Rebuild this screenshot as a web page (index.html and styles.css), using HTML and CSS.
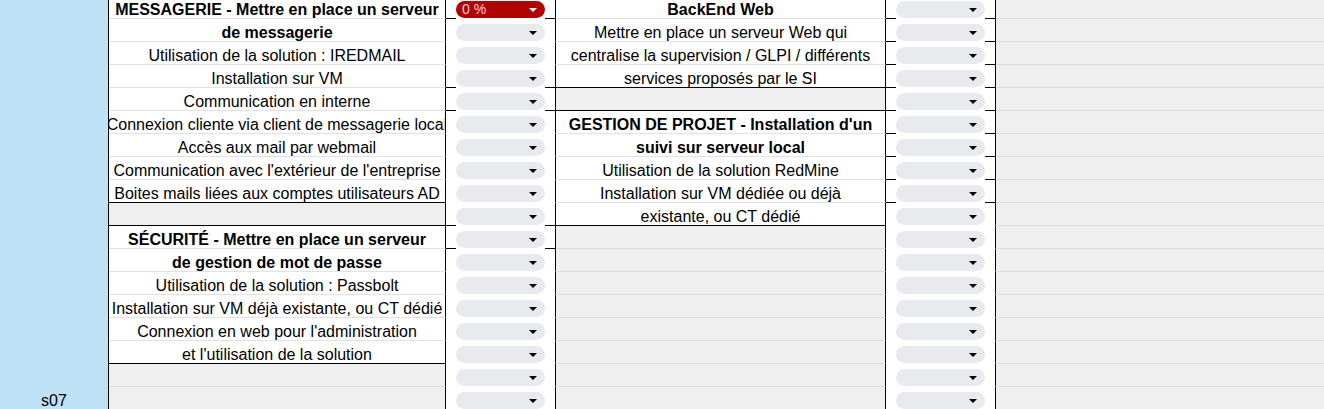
FILE: index.html
```html
<!DOCTYPE html>
<html lang="fr">
<head>
<meta charset="utf-8">
<title>Feuille</title>
<link rel="stylesheet" href="styles.css">
</head>
<body>
<div class="sheet">
  <!-- row 0 -->
  <div class="cell a"></div>
  <div class="cell b bold"><span>MESSAGERIE - Mettre en place un serveur</span></div>
  <div class="cell c bk"><div class="mask"><div class="pill red"><span class="val">0 %</span><span class="arr"></span></div></div></div>
  <div class="cell d bold"><span>BackEnd Web</span></div>
  <div class="cell e bk"><div class="mask"><div class="pill"><span class="arr"></span></div></div></div>
  <div class="cell f"></div>
  <!-- row 1 -->
  <div class="cell a"></div>
  <div class="cell b bold"><span>de messagerie</span></div>
  <div class="cell c"><div class="mask"><div class="pill"><span class="arr"></span></div></div></div>
  <div class="cell d"><span>Mettre en place un serveur Web qui</span></div>
  <div class="cell e bk"><div class="mask"><div class="pill"><span class="arr"></span></div></div></div>
  <div class="cell f"></div>
  <!-- row 2 -->
  <div class="cell a"></div>
  <div class="cell b"><span>Utilisation de la solution : IREDMAIL</span></div>
  <div class="cell c"><div class="mask"><div class="pill"><span class="arr"></span></div></div></div>
  <div class="cell d"><span>centralise la supervision / GLPI / différents</span></div>
  <div class="cell e bk"><div class="mask"><div class="pill"><span class="arr"></span></div></div></div>
  <div class="cell f"></div>
  <!-- row 3 -->
  <div class="cell a"></div>
  <div class="cell b"><span>Installation sur VM</span></div>
  <div class="cell c bk"><div class="mask"><div class="pill"><span class="arr"></span></div></div></div>
  <div class="cell d bk"><span>services proposés par le SI</span></div>
  <div class="cell e bk"><div class="mask"><div class="pill"><span class="arr"></span></div></div></div>
  <div class="cell f"></div>
  <!-- row 4 -->
  <div class="cell a"></div>
  <div class="cell b"><span>Communication en interne</span></div>
  <div class="cell c bk"><div class="mask"><div class="pill"><span class="arr"></span></div></div></div>
  <div class="cell d gray bk"></div>
  <div class="cell e bk"><div class="mask"><div class="pill"><span class="arr"></span></div></div></div>
  <div class="cell f"></div>
  <!-- row 5 -->
  <div class="cell a"></div>
  <div class="cell b"><span>Connexion cliente via client de messagerie local</span></div>
  <div class="cell c"><div class="mask"><div class="pill"><span class="arr"></span></div></div></div>
  <div class="cell d bold"><span>GESTION DE PROJET - Installation d'un</span></div>
  <div class="cell e bk"><div class="mask"><div class="pill"><span class="arr"></span></div></div></div>
  <div class="cell f"></div>
  <!-- row 6 -->
  <div class="cell a"></div>
  <div class="cell b"><span>Accès aux mail par webmail</span></div>
  <div class="cell c"><div class="mask"><div class="pill"><span class="arr"></span></div></div></div>
  <div class="cell d bold"><span>suivi sur serveur local</span></div>
  <div class="cell e bk"><div class="mask"><div class="pill"><span class="arr"></span></div></div></div>
  <div class="cell f"></div>
  <!-- row 7 -->
  <div class="cell a"></div>
  <div class="cell b"><span>Communication avec l'extérieur de l'entreprise</span></div>
  <div class="cell c"><div class="mask"><div class="pill"><span class="arr"></span></div></div></div>
  <div class="cell d"><span>Utilisation de la solution RedMine</span></div>
  <div class="cell e bk"><div class="mask"><div class="pill"><span class="arr"></span></div></div></div>
  <div class="cell f"></div>
  <!-- row 8 -->
  <div class="cell a"></div>
  <div class="cell b bk"><span>Boites mails liées aux comptes utilisateurs AD</span></div>
  <div class="cell c"><div class="mask"><div class="pill"><span class="arr"></span></div></div></div>
  <div class="cell d"><span>Installation sur VM dédiée ou déjà</span></div>
  <div class="cell e bk"><div class="mask"><div class="pill"><span class="arr"></span></div></div></div>
  <div class="cell f"></div>
  <!-- row 9 -->
  <div class="cell a"></div>
  <div class="cell b gray bk"></div>
  <div class="cell c bk"><div class="mask"><div class="pill"><span class="arr"></span></div></div></div>
  <div class="cell d bk"><span>existante, ou CT dédié</span></div>
  <div class="cell e"><div class="mask"><div class="pill"><span class="arr"></span></div></div></div>
  <div class="cell f"></div>
  <!-- row 10 -->
  <div class="cell a"></div>
  <div class="cell b bold"><span>SÉCURITÉ - Mettre en place un serveur</span></div>
  <div class="cell c bk"><div class="mask"><div class="pill"><span class="arr"></span></div></div></div>
  <div class="cell d gray"></div>
  <div class="cell e"><div class="mask"><div class="pill"><span class="arr"></span></div></div></div>
  <div class="cell f"></div>
  <!-- row 11 -->
  <div class="cell a"></div>
  <div class="cell b bold"><span>de gestion de mot de passe</span></div>
  <div class="cell c"><div class="mask"><div class="pill"><span class="arr"></span></div></div></div>
  <div class="cell d gray"></div>
  <div class="cell e"><div class="mask"><div class="pill"><span class="arr"></span></div></div></div>
  <div class="cell f"></div>
  <!-- row 12 -->
  <div class="cell a"></div>
  <div class="cell b"><span>Utilisation de la solution : Passbolt</span></div>
  <div class="cell c"><div class="mask"><div class="pill"><span class="arr"></span></div></div></div>
  <div class="cell d gray"></div>
  <div class="cell e"><div class="mask"><div class="pill"><span class="arr"></span></div></div></div>
  <div class="cell f"></div>
  <!-- row 13 -->
  <div class="cell a"></div>
  <div class="cell b"><span>Installation sur VM déjà existante, ou CT dédié</span></div>
  <div class="cell c"><div class="mask"><div class="pill"><span class="arr"></span></div></div></div>
  <div class="cell d gray"></div>
  <div class="cell e"><div class="mask"><div class="pill"><span class="arr"></span></div></div></div>
  <div class="cell f"></div>
  <!-- row 14 -->
  <div class="cell a"></div>
  <div class="cell b"><span>Connexion en web pour l'administration</span></div>
  <div class="cell c"><div class="mask"><div class="pill"><span class="arr"></span></div></div></div>
  <div class="cell d gray"></div>
  <div class="cell e"><div class="mask"><div class="pill"><span class="arr"></span></div></div></div>
  <div class="cell f"></div>
  <!-- row 15 -->
  <div class="cell a"></div>
  <div class="cell b bk"><span>et l'utilisation de la solution</span></div>
  <div class="cell c"><div class="mask"><div class="pill"><span class="arr"></span></div></div></div>
  <div class="cell d gray"></div>
  <div class="cell e"><div class="mask"><div class="pill"><span class="arr"></span></div></div></div>
  <div class="cell f"></div>
  <!-- row 16 -->
  <div class="cell a"></div>
  <div class="cell b gray"></div>
  <div class="cell c"><div class="mask"><div class="pill"><span class="arr"></span></div></div></div>
  <div class="cell d gray"></div>
  <div class="cell e"><div class="mask"><div class="pill"><span class="arr"></span></div></div></div>
  <div class="cell f"></div>
  <!-- row 17 -->
  <div class="cell a"><span>s07</span></div>
  <div class="cell b gray"></div>
  <div class="cell c"><div class="mask"><div class="pill"><span class="arr"></span></div></div></div>
  <div class="cell d gray"></div>
  <div class="cell e"><div class="mask"><div class="pill"><span class="arr"></span></div></div></div>
  <div class="cell f"></div>
</div>
</body>
</html>
```
FILE: styles.css
```css
* { box-sizing: border-box; margin: 0; padding: 0; }
html, body { height: 100%; overflow: hidden; background: #efefef; }
body {
  font-family: "Liberation Sans", Arial, sans-serif;
  font-size: 16px;
  color: #000;
}
.sheet {
  display: grid;
  grid-template-columns: 109px 337px 110px 330px 110px 1fr;
  grid-auto-rows: 23px;
  margin-top: -4px;
}
.cell {
  display: flex;
  justify-content: center;
  white-space: nowrap;
  overflow: hidden;
  line-height: 22px;
  padding-top: 3px;
  background: #fff;
  border-bottom: 1px solid #e2e2e2;
}
.bold { font-weight: bold; }
.a {
  background: #bfe1f6;
  border-bottom: none;
  border-right: 1px solid #000;
}
.b, .d { border-right: 1px solid #000; }
.gray { background: #efefef; border-bottom-color: #d9d9d9; }
.f { background: #efefef; border-bottom-color: #d9d9d9; }
.c, .e {
  display: block;
  overflow: visible;
  padding-top: 0;
  border-bottom: 1px solid #fff;
  border-right: 1px solid #000;
}
.cell.bk { border-bottom-color: #000; }
.mask {
  margin-left: 10px;
  width: 89px;
  height: 23px;
  background: #fff;
  padding-top: 5px;
}
.pill {
  height: 17px;
  border-radius: 8.5px;
  background: #e8eaed;
  display: flex;
  align-items: center;
  justify-content: flex-end;
  padding-right: 8px;
}
.arr {
  width: 0;
  height: 0;
  border-left: 4px solid transparent;
  border-right: 4px solid transparent;
  border-top: 4px solid #000;
}
.pill.red {
  background: #b10202;
  justify-content: space-between;
  padding-left: 6px;
}
.red .val {
  color: #ffcfc9;
  font-size: 14px;
  line-height: 17px;
}
.red .arr { border-top-color: #fff; }
```
